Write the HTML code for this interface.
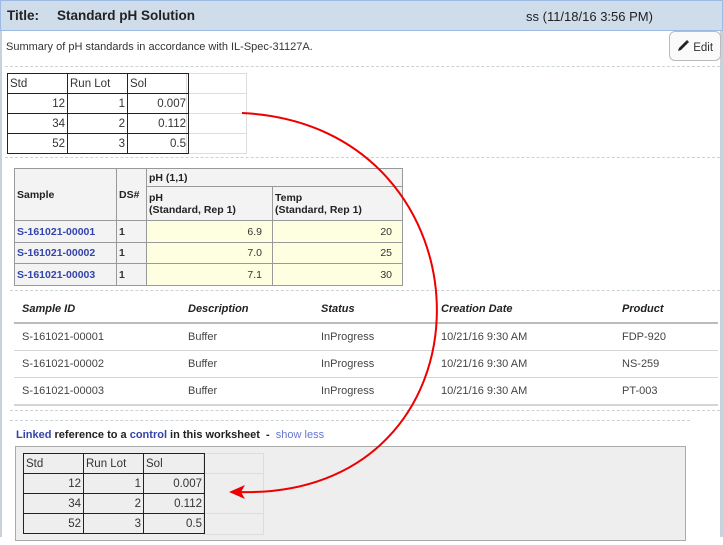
<!DOCTYPE html>
<html><head><style>
*{margin:0;padding:0;box-sizing:border-box}
body{width:723px;height:545px;background:#fff;font-family:"Liberation Sans",sans-serif;font-size:11px;color:#333;position:relative;overflow:hidden}
.a{position:absolute}
.dash{position:absolute;height:0;border-top:1px dashed #c9d3d6}
table{border-collapse:collapse;position:absolute;table-layout:fixed}
.t1 td{border:1px solid #222;height:20px;padding:0 2px;font-size:11.5px;color:#333}
.t1 td.r{text-align:right}
.ex{position:absolute;border:1px solid #ddd}
.t2 td{border:1px solid #999;padding:0 2px;font-size:10.5px}
.t2 th{border:1px solid #999;background:#f3f3f3;text-align:left;font-weight:bold;padding:0 2px;font-size:10.5px;color:#222}
.lnk{color:#3344aa;font-weight:bold}
.y{background:#fefee0;text-align:right;padding-right:10px!important}
.t3 td{font-size:11px;color:#444;position:absolute}
</style></head><body>
<div class="a" style="left:0;top:0;width:2px;height:537px;background:#c9d2da"></div>
<div class="a" style="left:720px;top:0;width:3px;height:537px;background:#c9d2da"></div>
<div class="a" style="left:0;top:0;width:723px;height:31px;background:#cfdcea;border:1px solid #9dbbe2"></div>
<div class="a" style="left:7px;top:8px;font-size:13.5px;font-weight:bold;color:#222">Title:</div>
<div class="a" style="left:57px;top:8px;font-size:13.5px;font-weight:bold;color:#222">Standard pH Solution</div>
<div class="a" style="left:526px;top:9px;font-size:13px;color:#222">ss (11/18/16 3:56 PM)</div>
<div class="a" style="left:6px;top:41px;font-size:11px;color:#333">Summary of pH standards in accordance with IL-Spec-31127A.</div>
<div class="a" style="left:669px;top:31px;width:52px;height:30px;border:1px solid #bbb;border-radius:6px;background:#fafafa;font-size:11.5px;color:#333;padding:7px 0 0 6px">
<svg width="14" height="14" viewBox="0 0 14 14" style="vertical-align:-2px"><path d="M2 12 L3 9 L10 2 L12 4 L5 11 Z" fill="#222"/><path d="M10 2 L11 1 L13 3 L12 4Z" fill="#222"/></svg> Edit</div>
<div class="dash" style="left:5px;top:66px;width:715px"></div>
<div class="ex" style="left:186px;top:73px;width:61px;height:81px"></div>
<div class="ex" style="left:186px;top:93px;width:61px;height:21px;border-left:0;border-right:0"></div>
<div class="ex" style="left:186px;top:133px;width:61px;height:1px;border-width:1px 0 0 0"></div>
<table class="t1" style="left:7px;top:73px;width:181px">
<col style="width:60px"><col style="width:60px"><col style="width:61px">
<tr><td>Std</td><td>Run Lot</td><td>Sol</td></tr>
<tr><td class="r">12</td><td class="r">1</td><td class="r">0.007</td></tr>
<tr><td class="r">34</td><td class="r">2</td><td class="r">0.112</td></tr>
<tr><td class="r">52</td><td class="r">3</td><td class="r">0.5</td></tr>
</table>
<div class="dash" style="left:5px;top:157px;width:715px"></div>
<table class="t2" style="left:14px;top:168px;width:388px">
<col style="width:102px"><col style="width:30px"><col style="width:126px"><col style="width:130px">
<tr style="height:18px"><th rowspan="2">Sample</th><th rowspan="2">DS#</th><th colspan="2">pH (1,1)</th></tr>
<tr style="height:34px"><th>pH<br>(Standard, Rep 1)</th><th>Temp<br>(Standard, Rep 1)</th></tr>
<tr style="height:22px"><td class="lnk" style="background:#f3f3f3">S-161021-00001</td><td style="background:#f3f3f3;font-weight:bold">1</td><td class="y">6.9</td><td class="y">20</td></tr>
<tr style="height:21px"><td class="lnk" style="background:#f3f3f3">S-161021-00002</td><td style="background:#f3f3f3;font-weight:bold">1</td><td class="y">7.0</td><td class="y">25</td></tr>
<tr style="height:22px"><td class="lnk" style="background:#f3f3f3">S-161021-00003</td><td style="background:#f3f3f3;font-weight:bold">1</td><td class="y">7.1</td><td class="y">30</td></tr>
</table>
<div class="dash" style="left:10px;top:290px;width:710px"></div>
<div class="a" style="left:22px;top:303px;font-weight:bold;font-style:italic;color:#222">Sample ID</div>
<div class="a" style="left:188px;top:303px;font-weight:bold;font-style:italic;color:#222">Description</div>
<div class="a" style="left:321px;top:303px;font-weight:bold;font-style:italic;color:#222">Status</div>
<div class="a" style="left:441px;top:303px;font-weight:bold;font-style:italic;color:#222">Creation Date</div>
<div class="a" style="left:622px;top:303px;font-weight:bold;font-style:italic;color:#222">Product</div>
<div class="a" style="left:14px;top:322px;width:704px;height:2px;background:#bbb"></div>
<div class="a" style="left:22px;top:331px;color:#444">S-161021-00001</div><div class="a" style="left:188px;top:331px;color:#444">Buffer</div><div class="a" style="left:321px;top:331px;color:#444">InProgress</div><div class="a" style="left:441px;top:331px;color:#444">10/21/16 9:30 AM</div><div class="a" style="left:622px;top:331px;color:#444">FDP-920</div>
<div class="a" style="left:14px;top:350px;width:704px;height:1px;background:#d5d5d5"></div>
<div class="a" style="left:22px;top:358px;color:#444">S-161021-00002</div><div class="a" style="left:188px;top:358px;color:#444">Buffer</div><div class="a" style="left:321px;top:358px;color:#444">InProgress</div><div class="a" style="left:441px;top:358px;color:#444">10/21/16 9:30 AM</div><div class="a" style="left:622px;top:358px;color:#444">NS-259</div>
<div class="a" style="left:14px;top:377px;width:704px;height:1px;background:#d5d5d5"></div>
<div class="a" style="left:22px;top:385px;color:#444">S-161021-00003</div><div class="a" style="left:188px;top:385px;color:#444">Buffer</div><div class="a" style="left:321px;top:385px;color:#444">InProgress</div><div class="a" style="left:441px;top:385px;color:#444">10/21/16 9:30 AM</div><div class="a" style="left:622px;top:385px;color:#444">PT-003</div>
<div class="a" style="left:14px;top:404px;width:704px;height:2px;background:#d5d5d5"></div>
<div class="dash" style="left:10px;top:410px;width:710px"></div>
<div class="dash" style="left:10px;top:420px;width:680px"></div>
<div class="a" style="left:16px;top:429px;font-size:11px;font-weight:bold;color:#222"><span style="color:#3344aa">Linked</span> reference to a <span style="color:#3344aa">control</span> in this worksheet &nbsp;- &nbsp;<span style="font-weight:normal;color:#6677cc">show less</span></div>
<div class="a" style="left:15px;top:446px;width:671px;height:95px;background:#eee;border:1px solid #aaa"></div>
<div class="ex" style="left:203px;top:453px;width:61px;height:82px"></div>
<div class="ex" style="left:203px;top:473px;width:61px;height:41px;border-left:0;border-right:0"></div>
<table class="t1" style="left:23px;top:453px;width:181px">
<col style="width:60px"><col style="width:60px"><col style="width:61px">
<tr><td>Std</td><td>Run Lot</td><td>Sol</td></tr>
<tr><td class="r">12</td><td class="r">1</td><td class="r">0.007</td></tr>
<tr><td class="r">34</td><td class="r">2</td><td class="r">0.112</td></tr>
<tr><td class="r">52</td><td class="r">3</td><td class="r">0.5</td></tr>
</table>
<svg class="a" style="left:0;top:0" width="723" height="545">
<path d="M242 113 C 500 125 505 500 238 492" fill="none" stroke="#e00" stroke-width="2"/>
<path d="M229 492 L245 485 L241 492 L245 499 Z" fill="#e00"/>
</svg>
</body></html>
